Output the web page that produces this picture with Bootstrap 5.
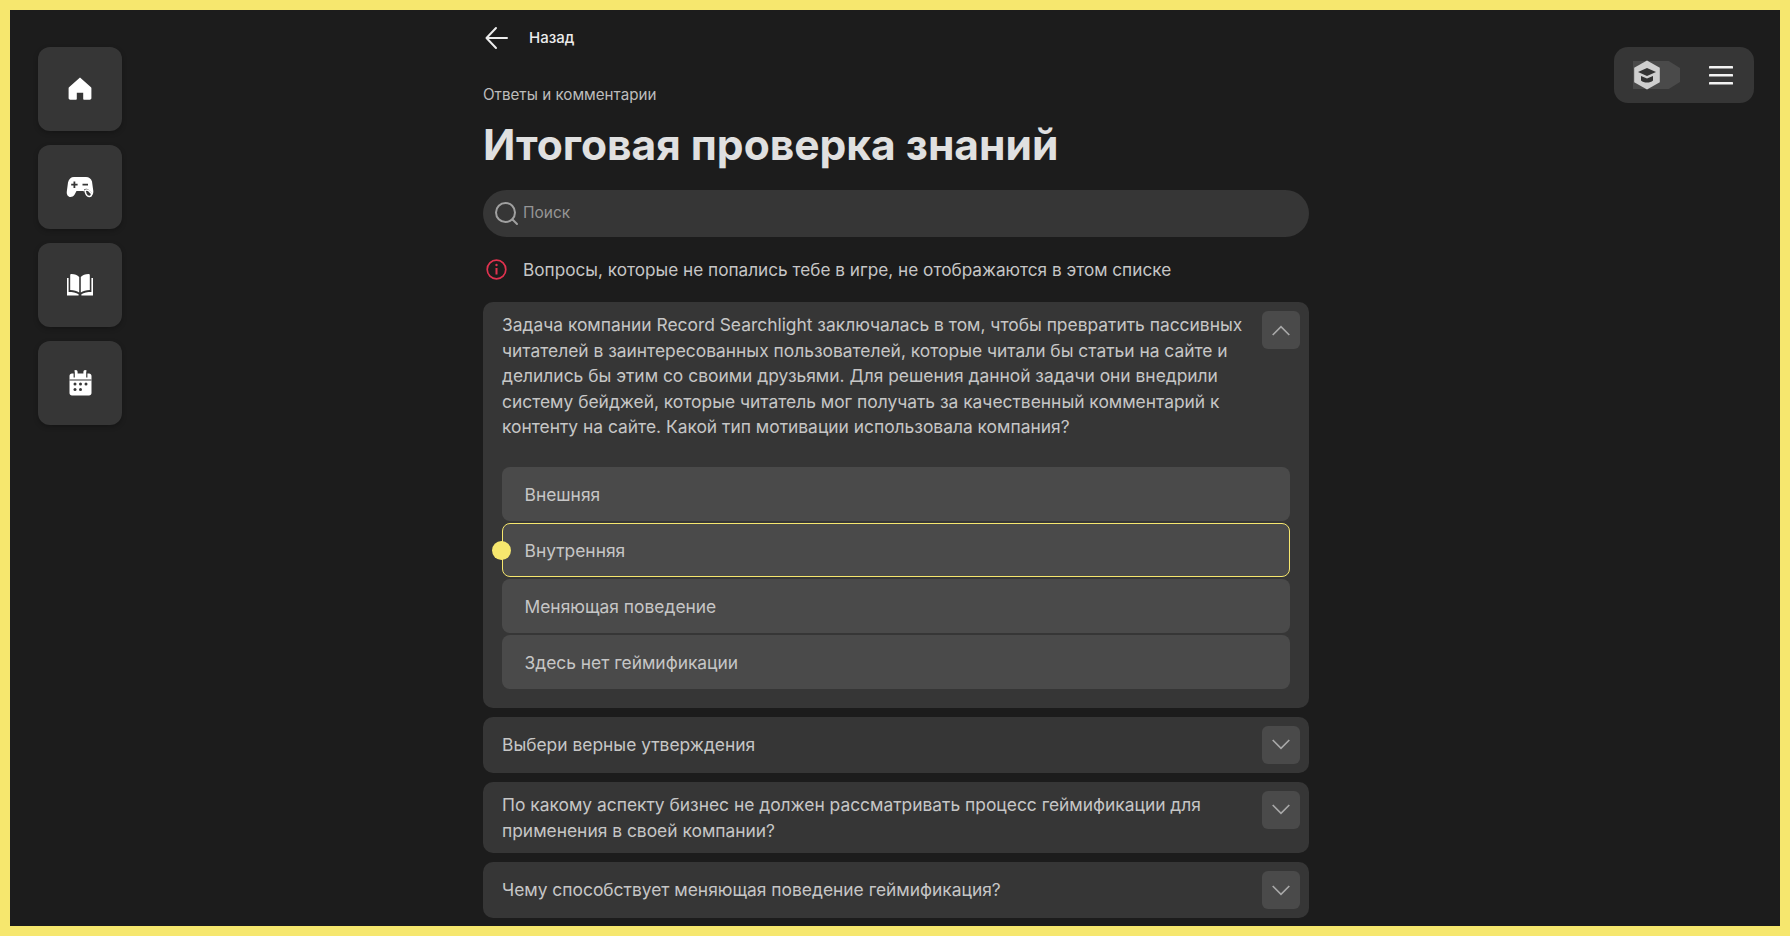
<!DOCTYPE html>
<html lang="ru">
<head>
  <meta charset="UTF-8" />
  <meta name="viewport" content="width=device-width, initial-scale=1.0">
  <title>Итоговая проверка знаний</title>
  <link href="https://cdn.jsdelivr.net/npm/bootstrap@5.3.2/dist/css/bootstrap.min.css" rel="stylesheet">
  <style>
    html, body { height: 100%; }
    body { background: #1c1c1c; color: #c6c6c6; font-family: Inter, Roboto, "Liberation Sans", sans-serif; font-size: 17.4px; line-height: 25.6px; border: 10px solid #f6e76e; overflow: hidden; }
    .page-grid { display: grid; grid-template-columns: 473px 826px 1fr; height: 100%; overflow: hidden; }
    .side-col { padding: 37px 0 0 28px; gap: 14px; }
    .side-btn { width: 84px; height: 84px; background: #363636; border-radius: 12px; box-shadow: 0 2px 5px rgba(0,0,0,.25); color: #fff; }
    .top-panel { width: 140px; height: 56px; margin: 37px 26px 0 auto; background: #363636; border-radius: 14px; }
    .theme-track { width: 47px; height: 28px; margin-left: 19px; background: #4a4a4a; clip-path: polygon(0 0, 76% 0, 100% 25%, 100% 75%, 76% 100%, 0 100%); }
    .hat-icon { margin-left: -47px; }
    .menu-btn { margin-right: 21px; }
    .back-link { height: 55px; color: #ececec; font-size: 15px; font-weight: 500; gap: 20px; padding-left: 2px; }
    .sub-title { font-size: 15.2px; color: #bcbcbc; line-height: 24px; margin-top: 18px; }
    .main-title { font-size: 42.5px; line-height: 54px; font-weight: 700; color: #e0e0e0; margin: 11px 0 18px; }
    .search-box { height: 47px; background: #363636; border-radius: 24px; padding-left: 11px; gap: 4px; }
    .search-input { background: transparent; border: 0; outline: 0; color: #c6c6c6; font-size: 15.5px; padding: 0 0 1px; flex: 1; }
    .search-input::placeholder { color: #959595; }
    .note-row { height: 65px; padding: 0 0 0 3px; gap: 16px; font-size: 17.2px; }
    .q-card { background: #363636; border-radius: 10px; padding: 9px 9px 9px 19px; margin-bottom: 9px; }
    .q-card.is-open { padding-bottom: 19px; padding-right: 19px; }
    .q-toggle { width: 38px; height: 38px; flex: none; background: #4a4a4a; border-radius: 6px; border: 0; padding: 0; }
    .is-open .q-toggle { margin-right: -10px; }
    .q-text { align-self: center; padding: 1px 16px 1px 0; }
    .opt-list { margin-top: 26px; gap: 2px; }
    .opt-item { position: relative; height: 54px; background: #4a4a4a; color: #c6c6c6; border: 1.5px solid transparent; border-radius: 8px; padding: 2px 21px 0 21.5px; font-size: 17.4px; }
    .opt-item.is-picked { border-color: #f6e76e; }
    .opt-dot { position: absolute; left: -11px; top: 17px; width: 19px; height: 19px; border-radius: 50%; background: #f6e76e; }
  </style>
</head>
<body>

<div class="page-grid">
  <div class="side-col d-flex flex-column align-items-start">
    <a class="side-btn d-flex align-items-center justify-content-center" href="#">
      <svg width="24" height="24" viewBox="0 0 24 24" fill="#fff"><path d="M12 .6 1 10.200c-.3.3-.4.6-.4 1V21c0 1 .7 1.700 1.700 1.700H8c.5 0 .8-.3.8-.8v-6.100h6.400v6.100c0 .5.3.8.8.8h5.700c1 0 1.700-.7 1.700-1.700v-9.800c0-.4-.1-.7-.4-1z"/></svg>
    </a>
    <a class="side-btn d-flex align-items-center justify-content-center" href="#">
      <svg width="28" height="22" viewBox="0 0 28 22"><path fill="#fff" fill-rule="evenodd" d="M8 1h12c3 0 5 1.600 6 4.500l1.300 9.500c.3 3-1.500 5.500-4 5.500-1.500 0-2.800-.8-3.800-2.200L17.500 15h-7l-2 3.800C7.500 20.200 6 21 4.500 21 2 21 .4 18.500.8 15.500L2 6.500C2.700 3 5 1 8 1zM7.500 5.500v2.300H5.200v1.800h2.300v2.300h1.800V9.600h2.300V7.800H9.300V5.500zM16.500 7.800v1.800h5.500V7.800z"/><path fill="#363636" d="M18 13.500c1.600-1 3.500-.8 5 .5l3 3.200-1.500 4.300h-2.500c-1.800-.5-3-1.700-3.800-3.500z"/><path fill="none" stroke="#fff" stroke-width="1.500" d="M19 14.500c1.300-.8 2.800-.6 4 .4l2.600 2.800c0 1.500-1 2.800-2.300 2.800-1.500 0-2.800-1.200-3.500-3z"/></svg>
    </a>
    <a class="side-btn d-flex align-items-center justify-content-center" href="#">
      <svg width="28" height="24" viewBox="0 0 28 24" fill="#fff"><path d="M13.200 19.600C11 17.800 8 16.900 4.200 16.900V2.400c0-.8.500-1.300 1.200-1.300 3.500 0 6 1 7.800 3z"/><path d="M14.800 19.600c2.200-1.800 5.200-2.700 9-2.700V2.400c0-.8-.5-1.300-1.200-1.300-3.500 0-6 1-7.800 3z"/><path d="M1 5h1.600v14c3.800 0 7.500.5 10 2.200v1.300H1z"/><path d="M27 5h-1.600v14c-3.800 0-7.500.5-10 2.200v1.300H27z"/></svg>
    </a>
    <a class="side-btn d-flex align-items-center justify-content-center" href="#">
      <svg width="25" height="28" viewBox="0 0 25 28"><path fill="#fff" d="M4 4.500h2V3c0-1.200.7-2 1.800-2s1.800.8 1.800 2v1.500h5.800V3c0-1.200.7-2 1.800-2s1.800.8 1.800 2v1.500h2c1.500 0 2.500 1 2.500 2.500v17c0 1.500-1 2.500-2.500 2.500H4c-1.500 0-2.500-1-2.500-2.500V7c0-1.500 1-2.500 2.500-2.500z"/><path fill="none" stroke="#363636" stroke-width="1.200" d="M1.500 11h22M6.200 2.200v6.200M18.800 2.200v6.200"/><g fill="#363636"><circle cx="7" cy="15" r="1.500"/><circle cx="12.500" cy="15" r="1.500"/><circle cx="18" cy="15" r="1.500"/><circle cx="7" cy="20.500" r="1.500"/><circle cx="12.500" cy="20.500" r="1.500"/></g></svg>
    </a>
  </div>

  <div>
    <a class="back-link d-flex align-items-center text-decoration-none" href="#">
      <svg width="24" height="24" viewBox="0 0 24 24" fill="none" stroke="#ececec" stroke-width="2" stroke-linecap="round" stroke-linejoin="round"><path d="M22 12H2M11 2 1.500 12 11 22"/></svg>
      <span>Назад</span>
    </a>
    <div class="sub-title">Ответы и комментарии</div>
    <h1 class="main-title">Итоговая проверка знаний</h1>
    <div class="search-box d-flex align-items-center">
      <svg width="25" height="25" viewBox="0 0 25 25" fill="none" stroke="#a0a0a0" stroke-width="2" stroke-linecap="round"><circle cx="11.500" cy="11.500" r="9.500"/><path d="M18.500 18.500l4.500 4.500"/></svg>
      <input class="search-input" type="text" placeholder="Поиск">
    </div>
    <div class="note-row d-flex align-items-center">
      <svg width="21" height="21" viewBox="0 0 21 21" fill="none" stroke="#e0324f" stroke-width="1.700"><circle cx="10.500" cy="10.500" r="9.300"/><path d="M10.500 9v6.500" stroke-width="2"/><circle cx="10.500" cy="6" r="1.200" fill="#e0324f" stroke="none"/></svg>
      <span>Вопросы, которые не попались тебе в игре, не отображаются в этом списке</span>
    </div>

    <div class="q-card is-open">
      <div class="d-flex align-items-start">
        <div class="q-text">Задача компании Record Searchlight заключалась в том, чтобы превратить пассивных читателей в заинтересованных пользователей, которые читали бы статьи на сайте и делились бы этим со своими друзьями. Для решения данной задачи они внедрили систему бейджей, которые читатель мог получать за качественный комментарий к контенту на сайте. Какой тип мотивации использовала компания?</div>
        <button class="q-toggle d-flex align-items-center justify-content-center" type="button">
          <svg width="18" height="11" viewBox="0 0 18 11" fill="none" stroke="#a8a8a8" stroke-width="1.700"><path d="M.7 10 9 1.700l8.300 8.300"/></svg>
        </button>
      </div>
      <div class="opt-list d-flex flex-column">
        <div class="opt-item d-flex align-items-center">Внешняя</div>
        <div class="opt-item is-picked d-flex align-items-center"><span class="opt-dot"></span>Внутренняя</div>
        <div class="opt-item d-flex align-items-center">Меняющая поведение</div>
        <div class="opt-item d-flex align-items-center">Здесь нет геймификации</div>
      </div>
    </div>

    <div class="q-card d-flex align-items-start">
      <div class="q-text flex-grow-1">Выбери верные утверждения</div>
      <button class="q-toggle d-flex align-items-center justify-content-center" type="button">
        <svg width="18" height="11" viewBox="0 0 18 11" fill="none" stroke="#a8a8a8" stroke-width="1.700"><path d="M.7 1 9 9.300 17.300 1"/></svg>
      </button>
    </div>
    <div class="q-card d-flex align-items-start">
      <div class="q-text flex-grow-1">По какому аспекту бизнес не должен рассматривать процесс геймификации для применения в своей компании?</div>
      <button class="q-toggle d-flex align-items-center justify-content-center" type="button">
        <svg width="18" height="11" viewBox="0 0 18 11" fill="none" stroke="#a8a8a8" stroke-width="1.700"><path d="M.7 1 9 9.300 17.300 1"/></svg>
      </button>
    </div>
    <div class="q-card d-flex align-items-start">
      <div class="q-text flex-grow-1">Чему способствует меняющая поведение геймификация?</div>
      <button class="q-toggle d-flex align-items-center justify-content-center" type="button">
        <svg width="18" height="11" viewBox="0 0 18 11" fill="none" stroke="#a8a8a8" stroke-width="1.700"><path d="M.7 1 9 9.300 17.300 1"/></svg>
      </button>
    </div>
  </div>

  <div>
    <div class="top-panel d-flex align-items-center">
      <div class="theme-track"></div>
      <svg class="hat-icon position-relative" width="28" height="30" viewBox="0 0 28 30">
        <path fill="#cfcfcf" d="M14 .5 26.800 7.800v14.400L14 29.500 1.200 22.200V7.800z"/>
        <path fill="#333" d="m14 8 9 4-9 4-9-4z"/>
        <path fill="#333" d="M8 16v4.500c1.500 1.400 3.500 2 6 2s4.500-.6 6-2V16l-6 2.600z"/>
      </svg>
      <button class="menu-btn btn p-0 border-0 d-flex ms-auto" type="button">
        <svg width="24" height="19" viewBox="0 0 24 19" fill="#f2f2f2"><rect y="0" width="24" height="2.500" rx=".6"/><rect y="8" width="24" height="2.500" rx=".6"/><rect y="16" width="24" height="2.500" rx=".6"/></svg>
      </button>
    </div>
  </div>
</div>

<script src="https://cdn.jsdelivr.net/npm/bootstrap@5.3.2/dist/js/bootstrap.bundle.min.js"></script>
</body>
</html>
